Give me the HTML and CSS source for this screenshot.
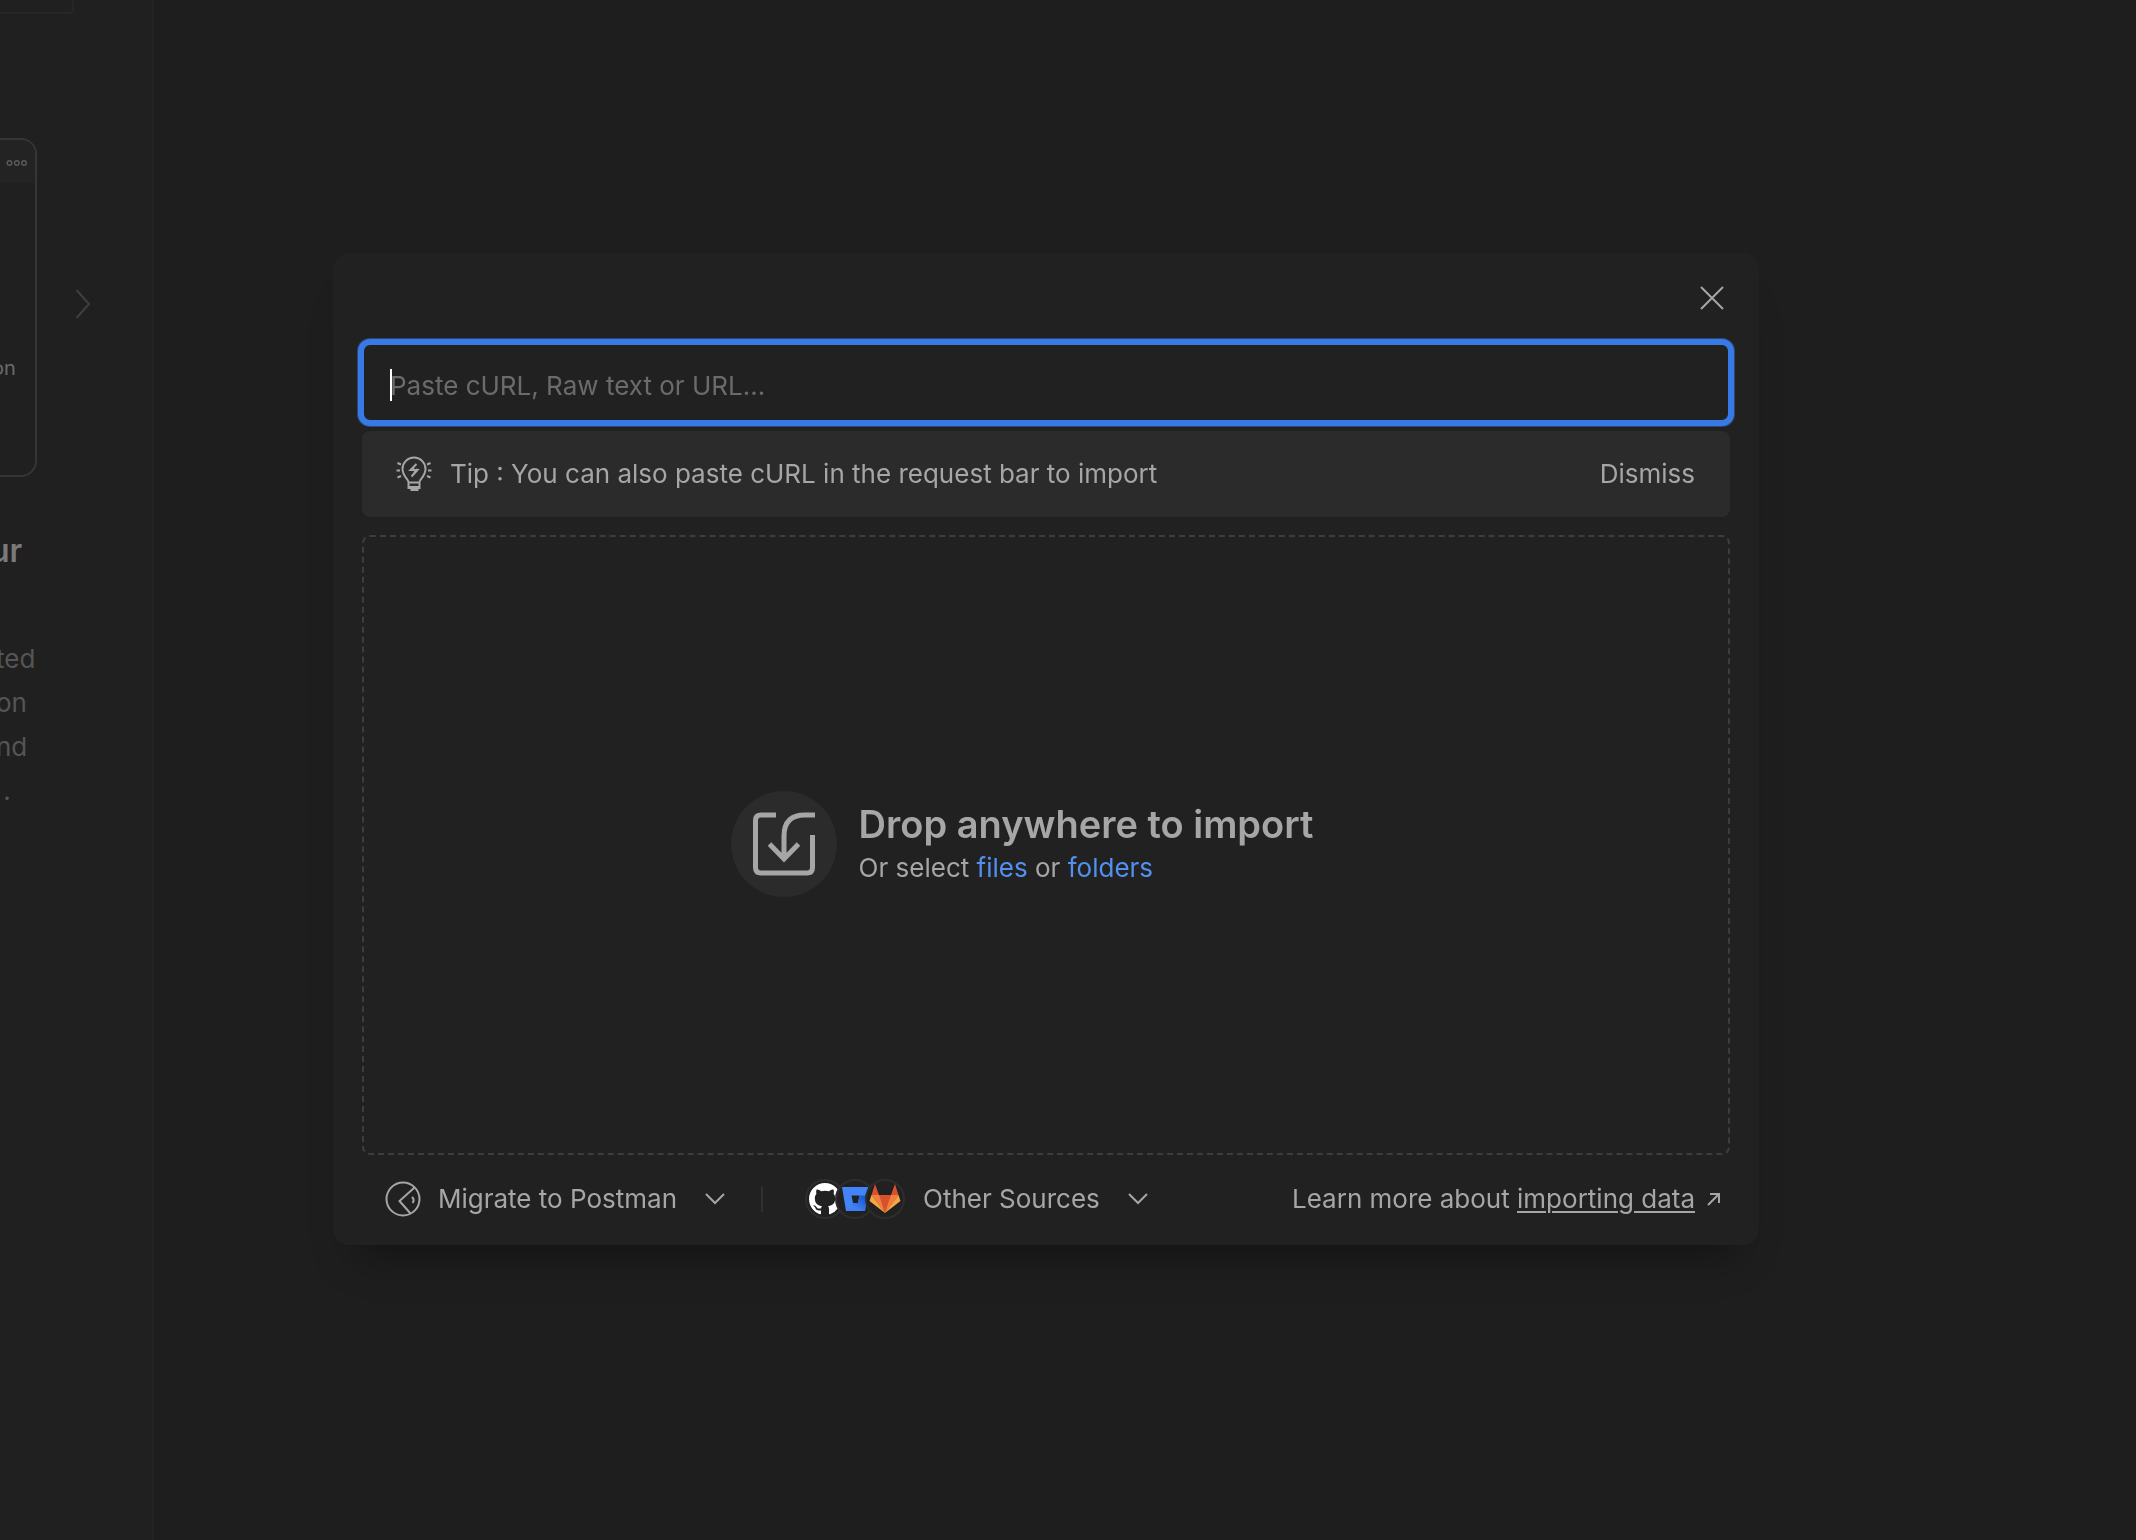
FILE: index.html
```html
<!DOCTYPE html>
<html lang="en">
<head>
<meta charset="utf-8">
<title>Import</title>
<link rel="stylesheet" href="styles.css">
</head>
<body>
<div class="workspace">
  <aside class="sidebar">
    <div class="sidebar-box"></div>
    <div class="carousel">
      <div class="preview">
        <div class="preview-head">
          <svg class="dots" viewBox="0 0 22 8" aria-hidden="true"><circle cx="3.500" cy="4" r="2.300"/><circle cx="10.800" cy="4" r="2.300"/><circle cx="18" cy="4" r="2.300"/></svg>
        </div>
        <span class="preview-label">on</span>
      </div>
      <button class="next" aria-label="Next"><svg viewBox="0 0 16 30"><path d="M1.500 1L14 15L1.500 29"/></svg></button>
    </div>
    <h2 class="side-title">ur</h2>
    <p class="side-text">ted<br>on<br>nd<br>&nbsp;.</p>
  </aside>
  <main class="canvas"></main>
</div>
<div class="overlay">
  <section class="modal" role="dialog" aria-label="Import">
    <header class="modal-head">
      <button class="close" aria-label="Close"><svg viewBox="0 0 24 24"><path d="M1 1L23 23M23 1L1 23"/></svg></button>
    </header>
    <div class="field">
      <input class="source" type="text" aria-label="Import source" placeholder="Paste cURL, Raw text or URL...">
      <span class="caret"></span>
    </div>
    <div class="tip">
      <svg class="tip-icon" viewBox="0 0 36 36" aria-hidden="true">
        <path d="M12.500 30V26C12.500 23.500 6.500 20 6.500 13A11.300 11.300 0 0 1 29.500 13C29.500 20 23.500 23.500 23.500 26V30M12 26.500H24M12 31H24M14.500 34H22.500M12.500 29V32H23.500V29"/>
        <path d="M20.500 8L14.500 14H21.500L15.500 20.500M18 11L15 14.500M21.500 13L18 17"/>
        <path d="M1.500 7L5 8.500M0.500 14.500H4M1.500 21.500L5 20M34.500 7L31 8.500M35.500 14.500H32M34.500 21.500L31 20"/>
      </svg>
      <span class="tip-text">Tip : You can also paste cURL in the request bar to import</span>
      <button class="dismiss">Dismiss</button>
    </div>
    <div class="drop">
      <div class="drop-badge">
        <svg viewBox="0 0 62 64" aria-hidden="true"><path d="M23 3H8Q2.500 3 2.500 8.500V55.500Q2.500 61 8 61H54Q59.500 61 59.500 55.500V23M62 3H52Q31 3 31 24V46M16.500 32L31 47L45.500 32"/></svg>
      </div>
      <div>
        <h1 class="drop-title">Drop anywhere to import</h1>
        <p class="drop-text">Or select <a href="#files">files</a> or <a href="#folders">folders</a></p>
      </div>
    </div>
    <footer class="modal-foot">
      <button class="menu migrate">
        <svg class="migrate-icon" viewBox="0 0 36 36" aria-hidden="true"><circle cx="18" cy="18" r="16.500"/><path d="M29.500 6.500L14.500 20L25.500 32.500M27 16Q30 19 27.500 22"/></svg>
        <span>Migrate to Postman</span>
        <svg class="chevron" viewBox="0 0 20 12" aria-hidden="true"><path d="M1 1L10 10L19 1"/></svg>
      </button>
      <span class="divider"></span>
      <button class="menu others">
        <span class="logos">
          <span class="logo"><svg viewBox="0 0 16 16" aria-hidden="true"><path fill="#fff" d="M8 0C3.580 0 0 3.580 0 8c0 3.540 2.290 6.530 5.470 7.590.4.070.55-.17.55-.38 0-.19-.01-.82-.01-1.490-2.010.37-2.530-.49-2.690-.94-.09-.23-.48-.94-.82-1.130-.28-.15-.68-.52-.01-.53.63-.01 1.080.58 1.230.82.72 1.210 1.870.87 2.330.66.07-.52.28-.87.51-1.070-1.780-.2-3.640-.89-3.640-3.950 0-.87.31-1.590.82-2.150-.08-.2-.36-1.020.08-2.120 0 0 .67-.21 2.200.82.64-.18 1.320-.27 2-.27s1.360.09 2 .27c1.530-1.040 2.200-.82 2.200-.82.44 1.100.16 1.920.08 2.120.51.56.82 1.270.82 2.150 0 3.070-1.870 3.750-3.650 3.950.29.25.54.73.54 1.480 0 1.070-.01 1.930-.01 2.200 0 .21.15.46.55.38A8.010 8.010 0 0 0 16 8c0-4.420-3.580-8-8-8z"/></svg></span>
          <span class="logo"><svg viewBox="0 0 32 32" aria-hidden="true"><defs><linearGradient id="bb" x1="1" y1="0.200" x2="0.300" y2="1"><stop offset="0.100" stop-color="#1d5bd0"/><stop offset="0.800" stop-color="#4080f5"/></linearGradient></defs><path fill="#4384f8" fill-rule="evenodd" d="M3 4H29L26 28H7ZM12.500 12.500L14 20H19L20.500 12.500Z"/><path fill="url(#bb)" d="M20.500 12.500H28L26 28H8L14 20H19Z"/></svg></span>
          <span class="logo"><svg viewBox="0 0 32 32" aria-hidden="true"><path fill="#d9502f" d="M6 1L10 12H22L26 1L29.500 12L16 30L2.500 12Z"/><path fill="#f07f3c" d="M2.500 12H10L16 30ZM29.500 12H22L16 30Z"/><path fill="#f2a743" d="M2.500 12L0.500 18L16 30ZM29.500 12L31.500 18L16 30Z"/></svg></span>
        </span>
        <span>Other Sources</span>
        <svg class="chevron" viewBox="0 0 20 12" aria-hidden="true"><path d="M1 1L10 10L19 1"/></svg>
      </button>
      <p class="learn">Learn more about <a href="#docs">importing data</a></p>
      <svg class="external" viewBox="0 0 14 14" aria-hidden="true"><path d="M1 13L12 2M3 2H12V11"/></svg>
    </footer>
  </section>
</div>
</body>
</html>
```
FILE: styles.css
```css
* { box-sizing: border-box; }
body {
  margin: 0;
  background: #1e1e1e;
  color: #a6a6a6;
  font: 26px/40px Inter, "Liberation Sans", sans-serif;
}
h1, h2, p { margin: 0; }
button {
  padding: 0;
  border: 0;
  background: none;
  color: inherit;
  font: inherit;
}
svg { display: block; fill: none; flex: none; }

.workspace { display: flex; min-height: 100vh; }
.sidebar {
  flex: none;
  width: 154px;
  overflow: hidden;
  background: #202020;
  border-right: 2px solid #232323;
}
.canvas { flex: 1; }
.sidebar-box {
  width: 74px;
  height: 14px;
  border: solid #262626;
  border-width: 0 2px 2px 0;
  border-bottom-right-radius: 4px;
}
.carousel {
  display: flex;
  align-items: center;
  margin-top: 124px;
}
.preview {
  width: 37px;
  height: 339px;
  border: solid #363636;
  border-width: 2px 2px 2px 0;
  border-radius: 0 16px 16px 0;
  overflow: hidden;
}
.preview-head {
  height: 43px;
  padding: 19px 0 0 6px;
  background: #232323;
}
.dots { width: 22px; height: 8px; stroke: #5a5a5a; stroke-width: 1.4; }
.preview-label {
  display: block;
  margin: 163px 0 0 -8px;
  color: #6b6b6b;
  font-size: 20px;
  line-height: 44px;
}
.next { margin-left: 38px; padding-bottom: 8px; }
.next svg { width: 16px; height: 30px; stroke: #404040; stroke-width: 2; }
.side-title {
  margin: 52px 0 0 -10px;
  color: #7a7a7a;
  font-size: 32px;
  line-height: 44px;
  font-weight: 600;
}
.side-text {
  margin: 64px 0 0 -4px;
  color: #555;
  line-height: 44px;
}

.overlay {
  position: fixed;
  inset: 0;
  padding: 253px 377px 0 333px;
}
.modal {
  padding: 0 29px;
  border-radius: 16px;
  background: #212121;
  box-shadow: 0 32px 40px -24px rgba(0, 0, 0, 0.4);
}
.modal-head {
  display: flex;
  justify-content: flex-end;
  height: 86px;
  padding: 33px 6px 0 0;
}
.close { align-self: flex-start; }
.close svg { width: 24px; height: 24px; stroke: #a6a6a6; stroke-width: 2; }

.field { position: relative; margin: 0 -4px 5px; }
.source {
  display: block;
  width: 100%;
  height: 87px;
  padding: 6px 26px 0;
  border: 6px solid #377ae5;
  border-radius: 12px;
  outline: 0;
  box-shadow: 0 0 0 1px #2b4874;
  background: #212121;
  color: inherit;
  font: inherit;
}
.source::placeholder { color: #6b6b6b; opacity: 1; }
.caret {
  position: absolute;
  left: 32px;
  top: 30px;
  width: 2px;
  height: 32px;
  background: #fff;
}

.tip {
  display: flex;
  align-items: center;
  height: 86px;
  padding: 0 35px 0 34px;
  border-radius: 8px;
  background: #2b2b2b;
}
.tip-icon { width: 36px; height: 36px; stroke: #a6a6a6; stroke-width: 2; }
.tip-text { flex: 1; margin-left: 18px; }

.drop {
  display: flex;
  align-items: center;
  justify-content: center;
  gap: 22px;
  height: 620px;
  margin-top: 18px;
  padding: 0 48px 2px 0;
  border: 2px dashed #3d3d3d;
  border-radius: 8px;
}
.drop-badge {
  display: flex;
  align-items: center;
  justify-content: center;
  width: 106px;
  height: 106px;
  border-radius: 50%;
  background: #2b2b2b;
}
.drop-badge svg { width: 62px; height: 64px; stroke: #a6a6a6; stroke-width: 5; }
.drop-title { font-size: 38px; line-height: 48px; font-weight: 600; }
.drop-text a { color: #5290f0; text-decoration: none; }

.modal-foot {
  display: flex;
  align-items: center;
  height: 90px;
  padding: 0 9px 2px 23px;
}
.menu { display: flex; align-items: center; }
.migrate-icon { width: 36px; height: 36px; margin-right: 17px; stroke: #a6a6a6; stroke-width: 2; }
.chevron { width: 20px; height: 12px; margin-left: 28px; stroke: #a6a6a6; stroke-width: 2; }
.divider { width: 2px; height: 26px; margin: 0 42px 0 36px; background: #303030; }
.logos { display: flex; margin-right: 18px; }
.logo {
  display: flex;
  align-items: center;
  justify-content: center;
  width: 40px;
  height: 40px;
  border: 2px solid #2d2d2d;
  border-radius: 50%;
  background: #212121;
}
.logo + .logo { margin-left: -10px; }
.logo svg { width: 32px; height: 32px; }
.learn { margin-left: auto; }
.learn a { color: inherit; text-underline-offset: 3px; text-decoration-thickness: 2px; }
.external { width: 14px; height: 14px; margin-left: 12px; stroke: #a6a6a6; stroke-width: 2; }
```
